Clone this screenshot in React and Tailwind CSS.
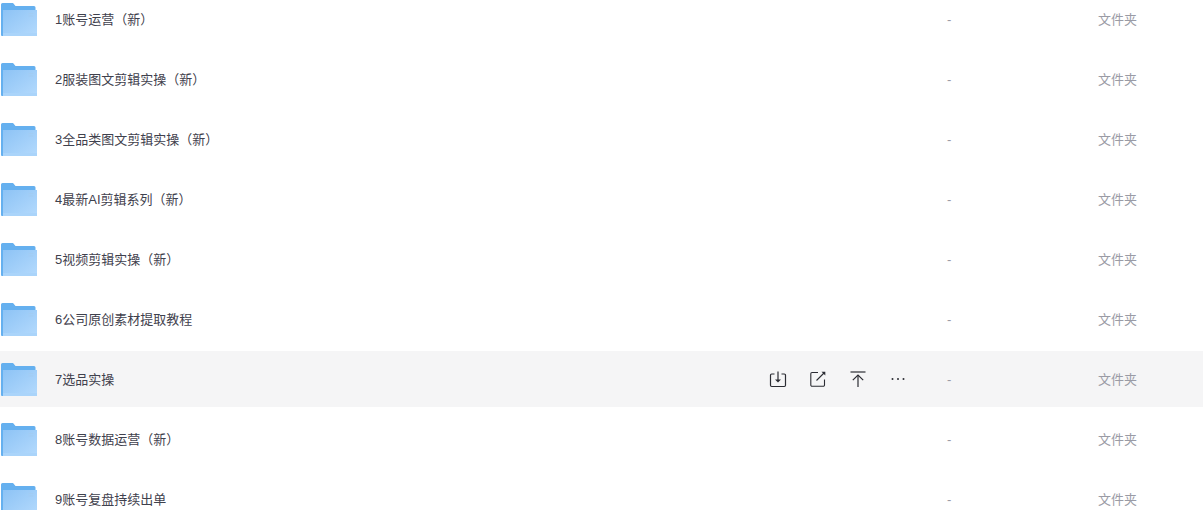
import React from 'react';

const rows = [
  '1账号运营（新）',
  '2服装图文剪辑实操（新）',
  '3全品类图文剪辑实操（新）',
  '4最新AI剪辑系列（新）',
  '5视频剪辑实操（新）',
  '6公司原创素材提取教程',
  '7选品实操',
  '8账号数据运营（新）',
  '9账号复盘持续出单',
];

const FolderIcon = () => (
  <svg width="36" height="33" viewBox="0 0 36 33" className="shrink-0">
    <defs>
      <linearGradient id="folderFront" x1="0" y1="0" x2="1" y2="1">
        <stop offset="0" stopColor="#8dc3f5" />
        <stop offset="1" stopColor="#b4dafd" />
      </linearGradient>
    </defs>
    <path d="M0 1.500A1.500 1.500 0 0 1 1.500 0H12l2.500 3H33A1.500 1.500 0 0 1 34.500 4.500V33H1A1 1 0 0 1 0 32Z" fill="#65b0ef" />
    <path d="M2 7H36V32a1 1 0 0 1-1 1H2Z" fill="url(#folderFront)" />
    <rect x="2" y="30" width="34" height="3" fill="#aad4fa" />
    <rect x="27.500" y="10" width="5" height="1" fill="#a2ccf2" />
    <rect x="27.500" y="12.500" width="5" height="1" fill="#a2ccf2" />
  </svg>
);

const ActionIcons = () => (
  <div className="flex items-center gap-[20px] text-[#2b2c33]">
    <svg width="20" height="20" viewBox="0 0 20 20" fill="none" stroke="currentColor" strokeWidth="1.200">
      <path d="M6.500 5H3.700A1.200 1.200 0 0 0 2.500 6.200V16.300A1.200 1.200 0 0 0 3.700 17.500H16.300A1.200 1.200 0 0 0 17.500 16.300V6.200A1.200 1.200 0 0 0 16.300 5H13.500" />
      <path d="M10 2.500V11" />
      <path d="M7 10.500H13L10 13.500Z" fill="currentColor" stroke="none" />
    </svg>
    <svg width="20" height="20" viewBox="0 0 20 20" fill="none" stroke="currentColor" strokeWidth="1.100">
      <path d="M10 3.500H4A1.200 1.200 0 0 0 2.800 4.700V16A1.200 1.200 0 0 0 4 17.200H15.300A1.200 1.200 0 0 0 16.500 16V10.500" />
      <path d="M8.500 11.500L16 4" />
      <path d="M13.500 2.700H17.300V6.500Z" fill="currentColor" stroke="none" />
    </svg>
    <svg width="20" height="20" viewBox="0 0 20 20" fill="none" stroke="currentColor" strokeWidth="1.200">
      <path d="M2.500 3H17.500" />
      <path d="M10 6V18" />
      <path d="M4.800 11.200L10 6L15.200 11.200" />
    </svg>
    <svg width="20" height="20" viewBox="0 0 20 20" fill="currentColor">
      <circle cx="4.500" cy="10" r="1" />
      <circle cx="10" cy="10" r="1" />
      <circle cx="15.500" cy="10" r="1" />
    </svg>
  </div>
);

const App = () => {
  return (
    <div className="h-[510px] w-[1203px] overflow-hidden bg-white font-['Liberation_Sans','Noto_Sans_CJK_SC',sans-serif]">
      <div className="-mt-[9px] flex flex-col gap-[4px]">
        {rows.map((name, i) => (
          <div key={name} className={`flex h-[56px] shrink-0 items-center ${i === 6 ? 'bg-[#f5f5f6]' : ''}`}>
            <div className="flex w-[55px] shrink-0 pl-[1px]">
              <FolderIcon />
            </div>
            <div className="w-[713px] shrink-0 pt-[2px] text-[13px] text-[#3f414d]">{name}</div>
            <div className="w-[179px] shrink-0">{i === 6 && <ActionIcons />}</div>
            <div className="w-[151px] shrink-0 pt-[2px] text-[13px] text-[#9a9ba5]">-</div>
            <div className="pt-[2px] text-[13px] text-[#9a9ba5]">文件夹</div>
          </div>
        ))}
      </div>
    </div>
  );
};

export default App;
